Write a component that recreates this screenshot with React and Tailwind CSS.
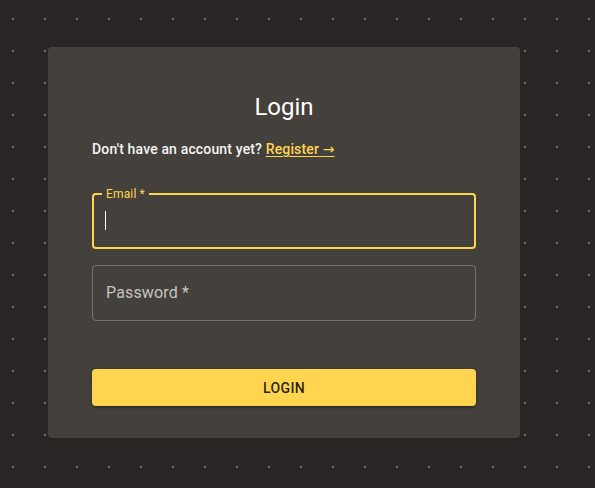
import React from 'react';

const Login = () => {
    return (
        <div className="min-h-screen bg-[#292524] bg-[radial-gradient(circle,#707070_1px,transparent_1.4px)] bg-[size:32px_32px] bg-[position:-3px_3px] pt-[47px] pl-[48px] font-['Roboto','Liberation_Sans',sans-serif]">
            <div className="w-[472px] rounded bg-[#44403c] px-[44px] pt-[44px] pb-[32px]">
                <h1 className="text-2xl leading-8 text-center text-white">Login</h1>

                <p className="mt-[16px] text-sm leading-5 font-medium tracking-[0.15px] text-[#f5f5f4]">
                    Don't have an account yet?{' '}
                    <a href="#" className="text-[#ffd54f] underline underline-offset-2 decoration-1">
                        Register <span className="font-['DejaVu_Sans',sans-serif] font-normal">→</span>
                    </a>
                </p>

                <form className="mt-[34px]" onSubmit={(e) => e.preventDefault()}>
                    <div className="relative h-[56px] rounded border-2 border-[#ffd54f]">
                        <label className="absolute -top-[9px] left-[8px] bg-[#44403c] px-[4px] text-xs leading-4 tracking-[0.15px] text-[#ffd54f]">
                            Email *
                        </label>
                        <span className="absolute left-[11px] top-[16px] h-[19px] w-px bg-white" />
                    </div>

                    <div className="mt-4 flex h-[56px] items-center rounded border border-white/25 px-[13px] text-base tracking-[0.15px] text-white/70">
                        Password *
                    </div>

                    <button
                        type="submit"
                        className="mt-12 h-[37px] w-full rounded bg-[#ffd54f] text-sm font-medium uppercase tracking-[0.4px] text-black/85 shadow-[0_3px_1px_-2px_rgba(0,0,0,0.2),0_2px_2px_0_rgba(0,0,0,0.14),0_1px_5px_0_rgba(0,0,0,0.12)]"
                    >
                        Login
                    </button>
                </form>
            </div>
        </div>
    );
};

export default Login;
